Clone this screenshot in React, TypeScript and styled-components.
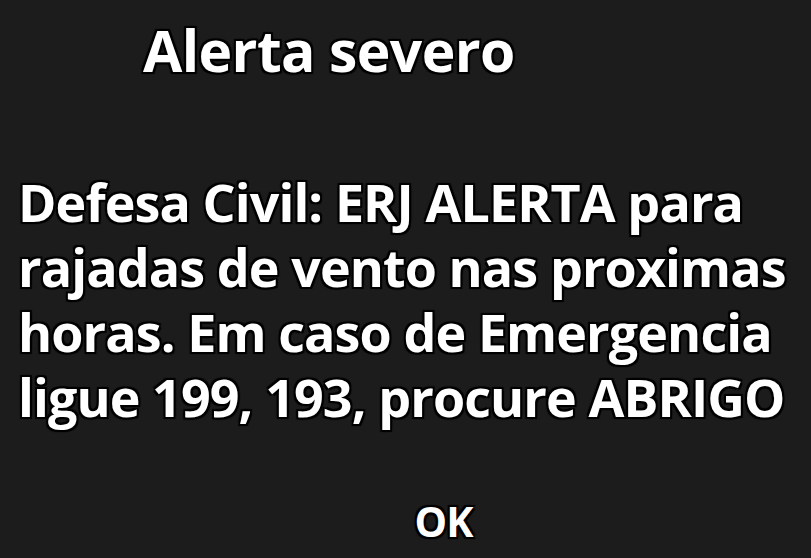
import React from "react";
import styled, { createGlobalStyle } from "styled-components";

const Global = createGlobalStyle`
  html, body { margin: 0; padding: 0; background: #1c1c1c; }
  body { width: 811px; height: 558px; overflow: hidden; }
`;

const outline = `
  text-shadow: 0 0 2px #000, 1px 1px 0 #000, -1px -1px 0 #000, 1px -1px 0 #000, -1px 1px 0 #000,
    2px 2px 1px #000, -2px 2px 1px #000, 2px -2px 1px #000, -2px -2px 1px #000;
`;

const Screen = styled.div`
  width: 811px;
  height: 558px;
  background: #1c1c1c;
  color: #fff;
  font-family: "Open Sans", "Lato", sans-serif;
  font-weight: 700;
  display: flex;
  flex-direction: column;
  box-sizing: border-box;
  padding: 16px 0 0 18px;
  overflow: hidden;
  ${outline}
`;

const Title = styled.h1`
  margin: 0 0 0 125px;
  font-size: 57px;
  font-weight: 700;
  line-height: 68px;
  letter-spacing: -0.6px;
  white-space: nowrap;
`;

const Message = styled.p`
  margin: 85px 0 0 0;
  font-size: 52px;
  line-height: 65px;
  letter-spacing: -0.9px;
  width: 793px;
`;

const Actions = styled.div`
  display: flex;
  justify-content: center;
  padding-left: 58px;
  margin-top: 67px;
`;

const OkButton = styled.button`
  background: none;
  border: none;
  color: #fff;
  font: inherit;
  font-size: 41px;
  line-height: 50px;
  letter-spacing: -1px;
  padding: 0;
  ${outline}
`;

export default function App() {
  return (
    <>
      <Global />
      <Screen>
        <Title>Alerta severo</Title>
        <Message>
          Defesa Civil: ERJ ALERTA para rajadas de vento nas proximas horas. Em caso de Emergencia ligue 199, 193, procure ABRIGO
        </Message>
        <Actions>
          <OkButton>OK</OkButton>
        </Actions>
      </Screen>
    </>
  );
}
